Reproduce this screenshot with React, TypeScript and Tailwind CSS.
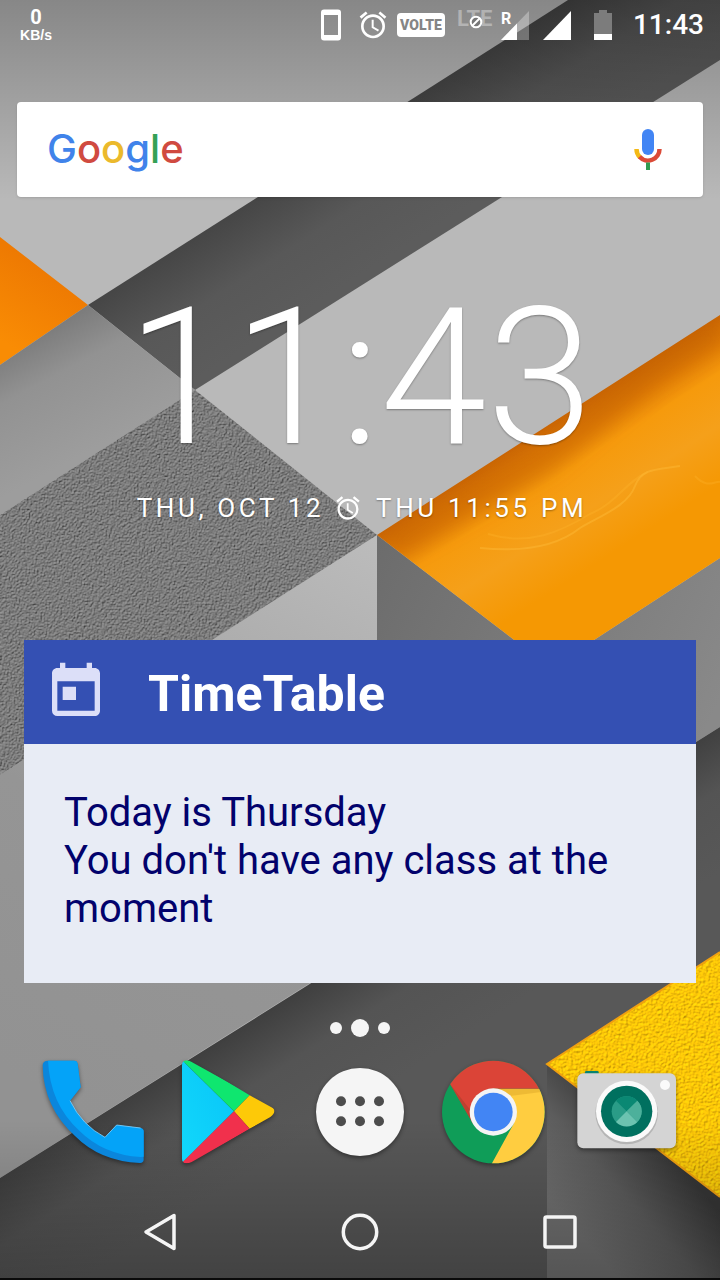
import { MdAccessAlarm, MdToday } from "react-icons/md";

function Wallpaper() {
  return (
    <svg
      className="absolute inset-0 h-full w-full"
      viewBox="0 0 720 1280"
      preserveAspectRatio="xMidYMid slice"
      aria-hidden="true"
    >
      <defs>
        <filter id="rough" x="0" y="0" width="100%" height="100%" colorInterpolationFilters="sRGB">
          <feTurbulence type="fractalNoise" baseFrequency="0.6" numOctaves="2" seed="4" result="n" />
          <feDiffuseLighting in="n" surfaceScale="1.4" lightingColor="#989898" result="l">
            <feDistantLight azimuth="235" elevation="55" />
          </feDiffuseLighting>
          <feComposite in="l" in2="SourceGraphic" operator="in" />
        </filter>
        <filter id="felt" x="0" y="0" width="100%" height="100%" colorInterpolationFilters="sRGB">
          <feTurbulence type="fractalNoise" baseFrequency="0.4" numOctaves="2" seed="9" result="n" />
          <feDiffuseLighting in="n" surfaceScale="0.8" lightingColor="#ffc808" diffuseConstant="1.17" result="l">
            <feDistantLight azimuth="235" elevation="58" />
          </feDiffuseLighting>
          <feComposite in="l" in2="SourceGraphic" operator="in" />
        </filter>
        <filter id="soft" x="-10%" y="-10%" width="120%" height="120%">
          <feGaussianBlur stdDeviation="9" />
        </filter>
        <linearGradient id="dark" gradientUnits="userSpaceOnUse" x1="265" y1="193" x2="330" y2="295">
          <stop offset="0" stopColor="#464646" />
          <stop offset="0.5" stopColor="#585858" />
          <stop offset="1" stopColor="#5c5c5c" />
        </linearGradient>
        <linearGradient id="left" gradientUnits="userSpaceOnUse" x1="70" y1="317" x2="130" y2="430">
          <stop offset="0" stopColor="#7c7c7c" />
          <stop offset="0.35" stopColor="#929292" />
          <stop offset="1" stopColor="#9d9d9d" />
        </linearGradient>
        <linearGradient id="orangeLeft" gradientUnits="userSpaceOnUse" x1="44" y1="270" x2="0" y2="340">
          <stop offset="0" stopColor="#ee7a02" />
          <stop offset="1" stopColor="#f98c04" />
        </linearGradient>
        <linearGradient id="orange" gradientUnits="userSpaceOnUse" x1="548" y1="425" x2="625" y2="545">
          <stop offset="0" stopColor="#c96503" />
          <stop offset="0.17" stopColor="#e07c05" />
          <stop offset="0.34" stopColor="#f69a0c" />
          <stop offset="0.65" stopColor="#f5a01a" />
          <stop offset="1" stopColor="#f59803" />
        </linearGradient>
        <linearGradient id="mid" gradientUnits="userSpaceOnUse" x1="377" y1="540" x2="720" y2="700">
          <stop offset="0" stopColor="#6c6c6c" />
          <stop offset="1" stopColor="#898989" />
        </linearGradient>
        <linearGradient id="lower" gradientUnits="userSpaceOnUse" x1="377" y1="535" x2="60" y2="1100">
          <stop offset="0" stopColor="#bcbcbc" />
          <stop offset="0.25" stopColor="#aeaeae" />
          <stop offset="0.6" stopColor="#959595" />
          <stop offset="1" stopColor="#929292" />
        </linearGradient>
        <linearGradient id="floor" gradientUnits="userSpaceOnUse" x1="200" y1="1050" x2="270" y2="1160">
          <stop offset="0" stopColor="#3e3e3e" />
          <stop offset="0.45" stopColor="#545454" />
          <stop offset="1" stopColor="#585858" />
        </linearGradient>
        <linearGradient id="corner" gradientUnits="userSpaceOnUse" x1="575" y1="1230" x2="665" y2="1150">
          <stop offset="0" stopColor="#717171" />
          <stop offset="0.5" stopColor="#5c5c5c" />
          <stop offset="1" stopColor="#363636" />
        </linearGradient>
        <linearGradient id="scrimTop" x1="0" y1="0" x2="0" y2="1">
          <stop offset="0" stopColor="#000" stopOpacity="0.27" />
          <stop offset="1" stopColor="#000" stopOpacity="0" />
        </linearGradient>
        <linearGradient id="scrimBottom" x1="0" y1="0" x2="0" y2="1">
          <stop offset="0" stopColor="#000" stopOpacity="0" />
          <stop offset="1" stopColor="#000" stopOpacity="0.25" />
        </linearGradient>
        <clipPath id="orangeClip">
          <path d="M377 535L720 315V558L551 668Z" />
        </clipPath>
      </defs>
      <rect width="720" height="1280" fill="#b9b9b9" />
      <path d="M568 0H720V60L195 390L88 305Z" fill="url(#dark)" />
      <path d="M0 237L88 305L0 365Z" fill="url(#orangeLeft)" />
      <path d="M88 305L195 390L0 515V365Z" fill="url(#left)" />
      <path d="M377 535V941L0 1178V775Z" fill="url(#lower)" />
      <path d="M377 535L551 668L720 558V727L377 941Z" fill="url(#mid)" />
      <path d="M195 390L377 535L0 775V515Z" fill="#808080" filter="url(#rough)" />
      <path d="M377 535L720 315V558L551 668Z" fill="url(#orange)" />
      <g clipPath="url(#orangeClip)" fill="none">
        <path d="M392 548L545 462L650 375L720 330" stroke="#b85b00" strokeOpacity="0.3" strokeWidth="26" filter="url(#soft)" />
        <path d="M480 548C520 552 555 548 580 528C600 516 628 506 635 486C642 468 655 470 680 466" stroke="#ffbd3c" strokeOpacity="0.4" strokeWidth="2" />
        <path d="M488 534C530 546 560 532 590 514C618 502 625 482 648 472M695 476C708 490 716 480 720 482" stroke="#ffb52e" strokeOpacity="0.3" strokeWidth="2" />
      </g>
      <path d="M720 727V952L547 1064V1280H0V1178Z" fill="url(#floor)" />
      <path d="M547 1064L720 1197V1280H547Z" fill="url(#corner)" />
      <path d="M547 1064L720 952V1197Z" fill="#fc0" filter="url(#felt)" />
      <path d="M720 952L547 1064L720 1197" fill="none" stroke="#f0a010" strokeWidth="2" />
      <rect width="720" height="200" fill="url(#scrimTop)" />
      <rect y="1120" width="720" height="160" fill="url(#scrimBottom)" />
      <rect y="1278" width="720" height="2" fill="#0a0a0a" />
    </svg>
  );
}

function StatusBar() {
  return (
    <header className="flex h-[50px] items-center pr-4 pl-4 text-white">
      <div className="mr-auto flex w-10 flex-col items-center font-bold">
        <span className="text-[20px] leading-5">0</span>
        <span className="font-['Liberation_Sans',sans-serif] text-[14px] leading-4">KB/s</span>
      </div>
      <svg className="h-8 w-5" viewBox="0 0 20 32" role="img" aria-label="Phone">
        <path
          fill="#fff"
          fillRule="evenodd"
          d="M3 0.5H17A3 3 0 0 1 20 3.500V28.500A3 3 0 0 1 17 31.500H3A3 3 0 0 1 0 28.500V3.500A3 3 0 0 1 3 0.500ZM3 6V26H17V6Z"
        />
      </svg>
      <MdAccessAlarm className="ml-4 size-8" />
      <span className="ml-2 flex h-6 w-12 items-center justify-center rounded bg-white text-[14px] font-black text-[#858585]">
        VOLTE
      </span>
      <span className="relative ml-3 h-8 w-8">
        <span className="block text-[22px] leading-5 font-bold text-white/35">LTE</span>
        <svg className="absolute top-1.5 left-3 size-3.5" viewBox="0 0 14 14" aria-hidden="true">
          <circle cx="7" cy="7" r="5.300" fill="#777" stroke="#fff" strokeWidth="2" />
          <path d="M3.500 10.500L10.500 3.500" stroke="#fff" strokeWidth="2" />
        </svg>
      </span>
      <span className="relative ml-3 h-8 w-7">
        <svg className="size-full" viewBox="0 0 28 32" role="img" aria-label="Roaming signal">
          <path d="M28 2V31H0Z" fill="#fff" fillOpacity="0.3" />
          <path d="M16 14.500V31H0Z" fill="#fff" />
        </svg>
        <span className="absolute top-0.5 left-0 text-[16px] leading-4 font-bold">R</span>
      </span>
      <svg className="ml-3.5 h-8 w-7" viewBox="0 0 28 32" role="img" aria-label="Signal">
        <path d="M28 2V31H0Z" fill="#fff" />
      </svg>
      <svg className="ml-[22px] h-8 w-5" viewBox="0 0 20 32" role="img" aria-label="Battery">
        <path d="M6 1H14V4H19V25H1V4H6Z" fill="#7c7c7c" />
        <path d="M1 25H19V31H1Z" fill="#fff" />
      </svg>
      <time className="ml-5 text-[28px] leading-8 font-medium">11:43</time>
    </header>
  );
}

function SearchBar() {
  return (
    <div className="mx-[17px] mt-[52px] flex h-[95px] items-center rounded bg-white shadow">
      <button type="button" aria-label="Google Search" className="h-full flex-1 pl-[30px] text-left">
        <span className="block pb-0.5 font-['Inter',sans-serif] text-[40px] leading-12 font-medium text-[#4083ea]">
          G<span className="text-[#d04a40]">o</span>
          <span className="text-[#ebb92c]">o</span>g<span className="text-[#35a156]">l</span>
          <span className="text-[#d04a40]">e</span>
        </span>
      </button>
      <button type="button" aria-label="Voice search" className="mr-[35px] flex h-full items-center">
        <svg className="h-12 w-10" viewBox="628 126 40 48" fill="none" aria-hidden="true">
          <rect x="642" y="129" width="12" height="26" rx="6" fill="#4285f4" />
          <path d="M636.500 149A11.500 11.500 0 0 0 640 157.300" stroke="#f4b916" strokeWidth="4.500" />
          <path d="M639.500 156.800A11.500 11.500 0 0 0 659.500 149" stroke="#db4a37" strokeWidth="4.500" />
          <path d="M648 162.500V170" stroke="#319b50" strokeWidth="4" />
        </svg>
      </button>
    </div>
  );
}

function ClockWidget() {
  return (
    <section
      aria-label="Clock"
      className="mt-[85px] flex flex-col items-center text-white [text-shadow:0_1px_2px_rgba(0,0,0,0.35)]"
    >
      <time className="text-[192px] leading-none font-light">11:43</time>
      <p className="mt-[18px] flex items-center pl-1 text-[26px] leading-8 tracking-[0.14em] whitespace-pre">
        <span>THU, OCT 12 </span>
        <MdAccessAlarm className="mr-1 size-7" />
        <span> THU 11:55 PM</span>
      </p>
    </section>
  );
}

function TimetableWidget() {
  return (
    <section className="mx-6 mt-[116px]">
      <header className="flex h-[104px] items-center bg-[#3450b3] px-5">
        <MdToday className="size-16 text-[#dcdff8]" />
        <h1 className="ml-10 pt-1 text-[50px] leading-14 font-bold text-white">TimeTable</h1>
      </header>
      <div className="bg-[#e8ecf5] px-10 pt-[45px] pb-[50px] text-[40px] leading-12 text-[#02026c]">
        <p>Today is Thursday</p>
        <p>You don't have any class at the moment</p>
      </div>
    </section>
  );
}

const iconClass = "size-[104px] overflow-visible drop-shadow-[0_2px_2px_rgba(0,0,0,0.4)]";

function PhoneIcon() {
  return (
    <svg className={iconClass} viewBox="63 148 312 312" aria-hidden="true">
      <path
        fill="#0b86dc"
        d="M84 150H162Q172 150 173 160L182 230L150 270Q186 344 255 380L290 343L362 352Q371 354 371 363V447Q371 456 360 457Q240 452 165 376Q70 290 68 164Q68 150 84 150Z"
      />
      <path
        fill="#04a3f8"
        d="M84 150H162Q172 150 173 160L182 230L150 270Q186 344 255 380L290 343L362 352Q371 354 371 363V438L362 439Q250 432 178 360Q90 280 84 150Z"
      />
      <path d="M150 270Q186 344 255 380L290 343L362 352" fill="none" stroke="#7fd0fb" strokeWidth="2.500" />
    </svg>
  );
}

function PlayIcon() {
  return (
    <svg className={iconClass} viewBox="463 150 312 312" aria-hidden="true">
      <defs>
        <linearGradient id="playBlue" x1="0" y1="1" x2="1" y2="0">
          <stop offset="0" stopColor="#12d8fb" />
          <stop offset="1" stopColor="#08c4f8" />
        </linearGradient>
        <clipPath id="playShape">
          <path d="M487 166Q487 151 502 151Q508 151 516 156L752 287Q765 296 764 304Q764 312 752 321L516 456Q508 460 500 460Q487 459 487 446Z" />
        </clipPath>
      </defs>
      <g clipPath="url(#playShape)">
        <path d="M487 150L643 304L487 460Z" fill="url(#playBlue)" />
        <path d="M487 150L643 304L690 256L506 145Z" fill="#0fe66f" />
        <path d="M643 304L690 256L770 300V315L690 356Z" fill="#fdc908" />
        <path d="M643 304L690 356L506 465L487 458Z" fill="#f1304c" />
      </g>
    </svg>
  );
}

function AppsIcon() {
  return (
    <svg className={iconClass} viewBox="24 150 312 312" aria-hidden="true">
      <circle cx="180" cy="306" r="132" fill="#f5f5f5" />
      {[274, 334].map((y) =>
        [123, 180, 237].map((x) => <circle key={`${x}-${y}`} cx={x} cy={y} r="15" fill="#4c4c4c" />),
      )}
    </svg>
  );
}

function ChromeIcon() {
  return (
    <svg className={iconClass} viewBox="426 150 312 312" aria-hidden="true">
      <defs>
        <clipPath id="chromeDisc">
          <circle cx="580" cy="306" r="154" />
        </clipPath>
      </defs>
      <g clipPath="url(#chromeDisc)">
        <rect x="423" y="150" width="312" height="312" fill="#0f9d58" />
        <path d="M580 236H740V465H573L641 341Z" fill="#ffcd40" />
        <path d="M450 222L430 150H740V236H580L519 341Z" fill="#db4437" />
        <path d="M580 236H724V246L630 258Z" fill="#c8901c" fillOpacity="0.3" />
        <path d="M450 222L519 341L511 300Z" fill="#7a3a20" fillOpacity="0.3" />
      </g>
      <circle cx="580" cy="306" r="71" fill="#f4f4f4" />
      <circle cx="580" cy="306" r="58" fill="#4285f4" />
    </svg>
  );
}

function CameraIcon() {
  return (
    <svg className={iconClass} viewBox="825 150 312 312" aria-hidden="true">
      <rect x="855" y="183" width="41" height="20" rx="4" fill="#07836f" />
      <rect x="832" y="190" width="296" height="225" rx="18" fill="#d4d4d4" />
      <circle cx="980" cy="309" r="94" fill="#b5b5b5" />
      <circle cx="980" cy="304" r="92" fill="#fafafa" />
      <circle cx="980" cy="304" r="77" fill="#00705f" />
      <circle cx="980" cy="304" r="45" fill="#2a9c87" />
      <path d="M980 304L948 272A45 45 0 0 1 1012 272Z" fill="#0a8873" />
      <path d="M980 304L948 336A45 45 0 0 0 1012 336Z" fill="#6cc3b0" />
      <path d="M980 304L1012 272A45 45 0 0 1 1012 336Z" fill="#4db09b" />
      <circle cx="1095" cy="225" r="15" fill="#fafafa" />
    </svg>
  );
}

function PageDots() {
  return (
    <div className="mt-9 flex h-[18px] items-center justify-center gap-[9px]">
      <span className="size-3 rounded-full bg-[#f5f5f5]" />
      <span className="size-[18px] rounded-full bg-[#f5f5f5]" />
      <span className="size-3 rounded-full bg-[#f5f5f5]" />
    </div>
  );
}

const apps = [
  { name: "Phone", Icon: PhoneIcon },
  { name: "Play Store", Icon: PlayIcon },
  { name: "All apps", Icon: AppsIcon },
  { name: "Chrome", Icon: ChromeIcon },
  { name: "Camera", Icon: CameraIcon },
];

function Dock() {
  return (
    <nav aria-label="Favourites" className="mt-[23px] grid grid-cols-5 px-[26px]">
      {apps.map(({ name, Icon }) => (
        <button key={name} type="button" aria-label={name} className="flex justify-center">
          <Icon />
        </button>
      ))}
    </nav>
  );
}

function NavigationBar() {
  return (
    <nav aria-label="System" className="mt-5 grid h-24 grid-cols-3 px-[60px]">
      <button type="button" aria-label="Back" className="flex items-center justify-center">
        <svg className="size-10" viewBox="0 0 40 40" fill="none" stroke="#f5f5f5" strokeWidth="3.500" strokeLinejoin="round">
          <path d="M34 3.500V36.500L6 20Z" />
        </svg>
      </button>
      <button type="button" aria-label="Home" className="flex items-center justify-center">
        <svg className="size-10" viewBox="0 0 40 40" fill="none" stroke="#f5f5f5" strokeWidth="3.500">
          <circle cx="20" cy="20" r="16.700" />
        </svg>
      </button>
      <button type="button" aria-label="Recent apps" className="flex items-center justify-center">
        <svg className="size-10" viewBox="0 0 40 40" fill="none" stroke="#f5f5f5" strokeWidth="3.500">
          <rect x="5" y="5" width="30" height="30" rx="1.500" />
        </svg>
      </button>
    </nav>
  );
}

export default function App() {
  return (
    <div className="relative min-h-screen overflow-hidden font-['Roboto',sans-serif]">
      <Wallpaper />
      <main className="relative flex flex-col">
        <StatusBar />
        <SearchBar />
        <ClockWidget />
        <TimetableWidget />
        <PageDots />
        <Dock />
        <NavigationBar />
      </main>
    </div>
  );
}
